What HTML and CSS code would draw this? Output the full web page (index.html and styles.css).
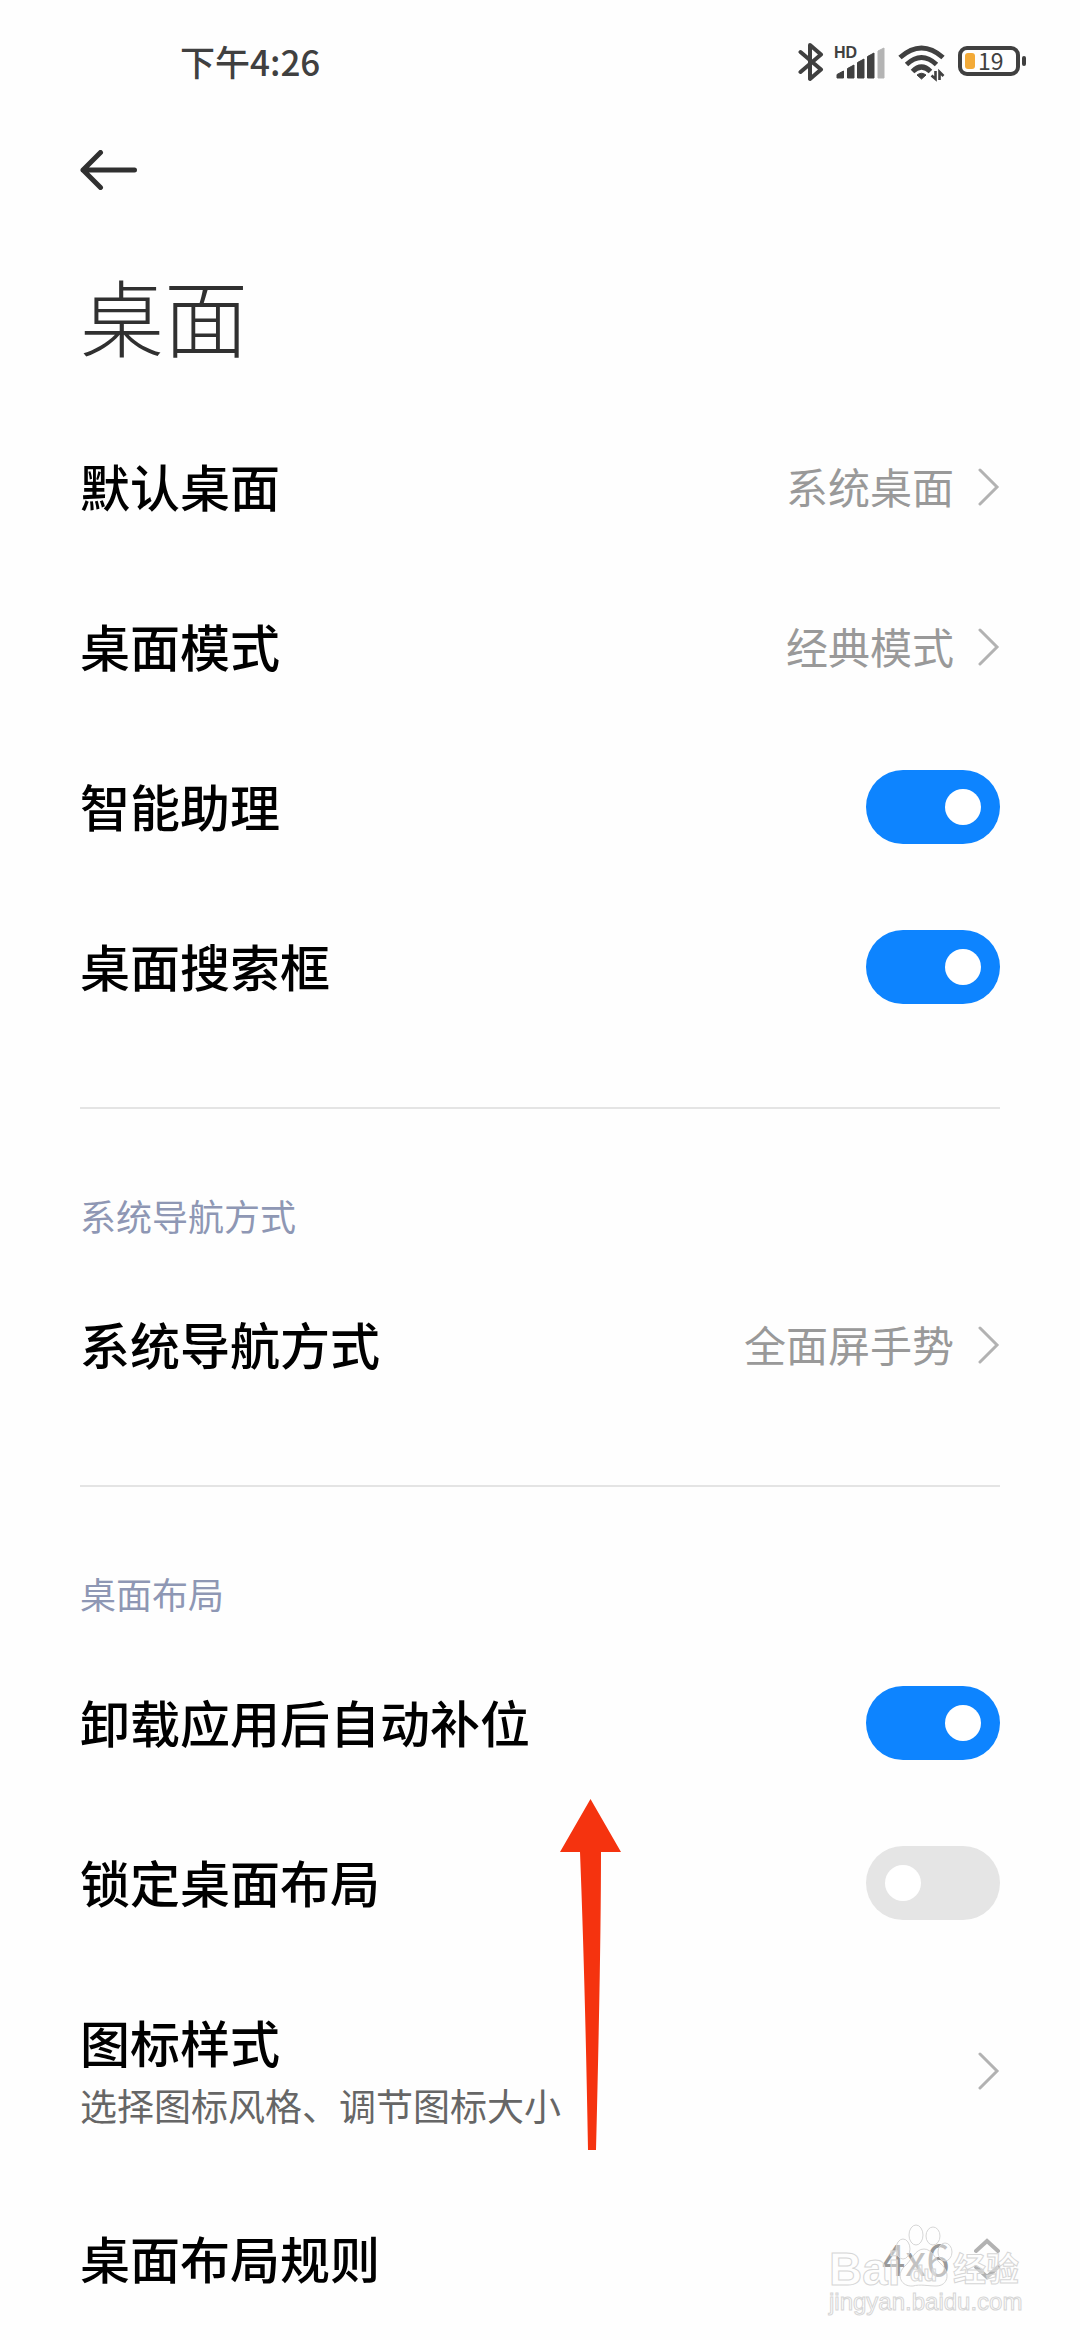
FILE: index.html
```html
<!DOCTYPE html>
<html lang="zh-CN">
<head>
  <meta charset="UTF-8">
  <meta name="viewport" content="width=device-width, initial-scale=1.0">
  <title>桌面</title>
  <link rel="stylesheet" href="styles.css">
</head>
<body>
  <div class="status-bar">
    <span class="time">下午4:26</span>
    <div class="status-icons">
      <svg class="bluetooth" width="26" height="40" viewBox="0 0 26 40" aria-hidden="true">
        <path d="M2.500 10L23 27.500L12 37V3L23 12.500L2.500 30" fill="none" stroke="#404040" stroke-width="4" stroke-linecap="round" stroke-linejoin="round"/>
      </svg>
      <svg class="signal" width="52" height="40" viewBox="0 0 52 40" aria-hidden="true">
        <text x="0" y="16" class="hd">HD</text>
        <path d="M3 36V32.500L9.500 29V36ZM13.500 36V26.500L20 23V36ZM23.500 36V20.500L30 17V36ZM33.500 36V14.500L40 11V36Z" fill="#404040" stroke="#404040" stroke-linejoin="round"/>
        <path d="M44 36V9L50 6V36Z" fill="#b4b4b4" stroke="#b4b4b4" stroke-linejoin="round"/>
      </svg>
      <svg class="wifi" width="48" height="40" viewBox="0 0 48 40" aria-hidden="true">
        <g fill="none" stroke="#404040" stroke-width="5">
          <path d="M2 15.500Q23.500 -3.500 45 15.500"/>
          <path d="M8.500 22.500Q23.500 8.500 38.500 22.500"/>
          <path d="M14.500 29.500Q23.500 20.500 32.500 29.500"/>
        </g>
        <path d="M19 33Q23.500 29.500 28 33L23.500 37Z" fill="#404040" stroke="#404040" stroke-linejoin="round"/>
        <path d="M37.500 29V37L33.500 33.500M41.500 38V30L45.500 34" fill="none" stroke="#404040" stroke-width="2.600"/>
      </svg>
      <svg class="battery" width="70" height="40" viewBox="0 0 70 40" aria-hidden="true">
        <rect x="2" y="6" width="58" height="26" rx="7" fill="none" stroke="#404040" stroke-width="4"/>
        <rect x="7" y="11" width="10" height="16" rx="3" fill="#f3aa37"/>
        <rect x="64" y="14" width="4" height="10" rx="2" fill="#404040"/>
        <text x="20" y="28" class="percent">19</text>
      </svg>
    </div>
  </div>

  <header class="header">
    <button class="back" type="button" aria-label="返回">
      <svg width="58" height="40" viewBox="0 0 58 40">
        <path d="M20.500 2.500L3 20L20.500 37.500M3 20H54.500" fill="none" stroke="#303030" stroke-width="5" stroke-linecap="round" stroke-linejoin="round"/>
      </svg>
    </button>
    <h1>桌面</h1>
  </header>

  <main class="settings">
    <section class="group">
      <a class="row" href="#">
        <span class="label">默认桌面</span>
        <span class="value">系统桌面</span>
        <svg class="chevron" width="22" height="38" viewBox="0 0 22 38"><path d="M2 2L19 19L2 36"/></svg>
      </a>
      <a class="row" href="#">
        <span class="label">桌面模式</span>
        <span class="value">经典模式</span>
        <svg class="chevron" width="22" height="38" viewBox="0 0 22 38"><path d="M2 2L19 19L2 36"/></svg>
      </a>
      <div class="row">
        <label class="label" for="assistant">智能助理</label>
        <input class="switch" type="checkbox" id="assistant" checked>
      </div>
      <div class="row">
        <label class="label" for="search">桌面搜索框</label>
        <input class="switch" type="checkbox" id="search" checked>
      </div>
    </section>

    <section class="group">
      <h2>系统导航方式</h2>
      <a class="row" href="#">
        <span class="label">系统导航方式</span>
        <span class="value">全面屏手势</span>
        <svg class="chevron" width="22" height="38" viewBox="0 0 22 38"><path d="M2 2L19 19L2 36"/></svg>
      </a>
    </section>

    <section class="group">
      <h2>桌面布局</h2>
      <div class="row">
        <label class="label" for="refill">卸载应用后自动补位</label>
        <input class="switch" type="checkbox" id="refill" checked>
      </div>
      <div class="row">
        <label class="label" for="lock">锁定桌面布局</label>
        <input class="switch" type="checkbox" id="lock">
        <svg class="pointer" width="62" height="352" viewBox="0 0 62 352" aria-hidden="true">
          <path d="M30.500 0L61 53H41Q41 150 36 351H28Q25 180 20 53H0Z" fill="#f5330f"/>
        </svg>
      </div>
      <a class="row row-tall" href="#">
        <span class="label">图标样式<small>选择图标风格、调节图标大小</small></span>
        <svg class="chevron" width="22" height="38" viewBox="0 0 22 38"><path d="M2 2L19 19L2 36"/></svg>
      </a>
      <div class="row">
        <label class="label" for="grid">桌面布局规则</label>
        <select class="value" id="grid">
          <option>4x6</option>
        </select>
        <svg class="updown" width="26" height="42" viewBox="0 0 26 42"><path d="M2 13L13 3L24 13M2 29L13 39L24 29"/></svg>
        <svg class="watermark" width="200" height="96" viewBox="0 0 200 96" aria-hidden="true">
          <ellipse cx="89" cy="12" rx="7" ry="10"/>
          <ellipse cx="106" cy="13" rx="7" ry="9"/>
          <ellipse cx="76" cy="26" rx="7" ry="10"/>
          <ellipse cx="118" cy="29" rx="7" ry="9"/>
          <path d="M97 26C105 26 108 36 114 41C124 50 121 63 109 63C101 63 93 61 86 63C74 64 69 52 77 44C85 37 88 26 97 26Z"/>
          <text x="2" y="62" class="brand">Bai</text>
          <text x="83" y="58" class="du">du</text>
          <text x="126" y="58" class="brand-cn">经验</text>
          <text x="2" y="87" class="site">jingyan.baidu.com</text>
        </svg>
      </div>
    </section>
  </main>
</body>
</html>
```

FILE: styles.css
```css
* {
  box-sizing: border-box;
}
body {
  margin: 0;
  background: #fefefe;
  color: #000;
  font-family: "Noto Sans CJK SC", sans-serif;
}

/* Status bar */
.status-bar {
  display: flex;
  justify-content: space-between;
  align-items: center;
  height: 124px;
  padding: 0 52px 0 180px;
  color: #404040;
}
.time {
  padding-bottom: 4px;
  font-size: 35px;
  font-weight: 500;
}
.status-icons {
  display: flex;
  gap: 12px;
}
.bluetooth {
  margin-right: -2px;
}
.hd {
  font-family: "Liberation Sans", sans-serif;
  font-size: 16px;
  font-weight: 700;
  fill: #404040;
}
.percent {
  font-size: 23px;
  fill: #404040;
}

/* Header */
.header {
  padding: 26px 80px 28px;
}
.back {
  display: block;
  padding: 0;
  border: none;
  background: none;
  cursor: pointer;
}
.back svg {
  display: block;
}
h1 {
  margin: 60px 0 0;
  color: #303030;
  font-size: 84px;
  font-weight: 300;
  line-height: 129px;
}

/* Settings list */
.settings {
  padding: 0 80px;
}
.group + .group {
  margin-top: 60px;
  border-top: 2px solid #e4e4e4;
}
h2 {
  margin: 0;
  padding: 80px 0 24px;
  color: #8e97b4;
  font-size: 36px;
  font-weight: 400;
  line-height: 52px;
}
.row {
  position: relative;
  display: flex;
  align-items: center;
  gap: 24px;
  height: 160px;
  color: #000;
  text-decoration: none;
}
.row-tall {
  height: 216px;
}
.label {
  flex: 1;
  padding-bottom: 4px;
  font-size: 50px;
  font-weight: 500;
  line-height: 72px;
}
.label small {
  display: block;
  color: #666;
  font-size: 37px;
  font-weight: 400;
  line-height: 56px;
}
.value {
  padding-bottom: 4px;
  color: #999;
  font-size: 42px;
}
select.value {
  appearance: none;
  padding: 0 0 4px;
  border: none;
  background: none;
  font-family: inherit;
}
.chevron, .updown {
  fill: none;
  stroke: #b2b2b2;
  stroke-width: 3;
  stroke-linecap: round;
}
.updown {
  stroke-width: 4;
}
.switch {
  appearance: none;
  width: 134px;
  height: 74px;
  margin: 0;
  padding: 19px;
  border-radius: 37px;
  background: #e5e5e5;
  cursor: pointer;
}
.switch::before {
  content: "";
  display: block;
  width: 36px;
  height: 36px;
  border-radius: 50%;
  background: #fff;
}
.switch:checked {
  background: #0d84ff;
}
.switch:checked::before {
  margin-left: auto;
}

/* Overlays */
.pointer {
  position: absolute;
  top: -4px;
  left: 480px;
  z-index: 1;
}
.watermark {
  position: absolute;
  right: -27px;
  bottom: 20px;
  fill: rgba(255, 255, 255, 0.4);
  stroke: #d6d6d6;
  stroke-width: 1px;
  pointer-events: none;
}
.brand, .du, .site {
  font-family: "Liberation Sans", sans-serif;
}
.brand {
  font-size: 46px;
  font-weight: 700;
}
.brand-cn {
  font-size: 33px;
  font-weight: 700;
}
.du {
  font-size: 22px;
  font-weight: 700;
}
.site {
  font-size: 24px;
}
```
